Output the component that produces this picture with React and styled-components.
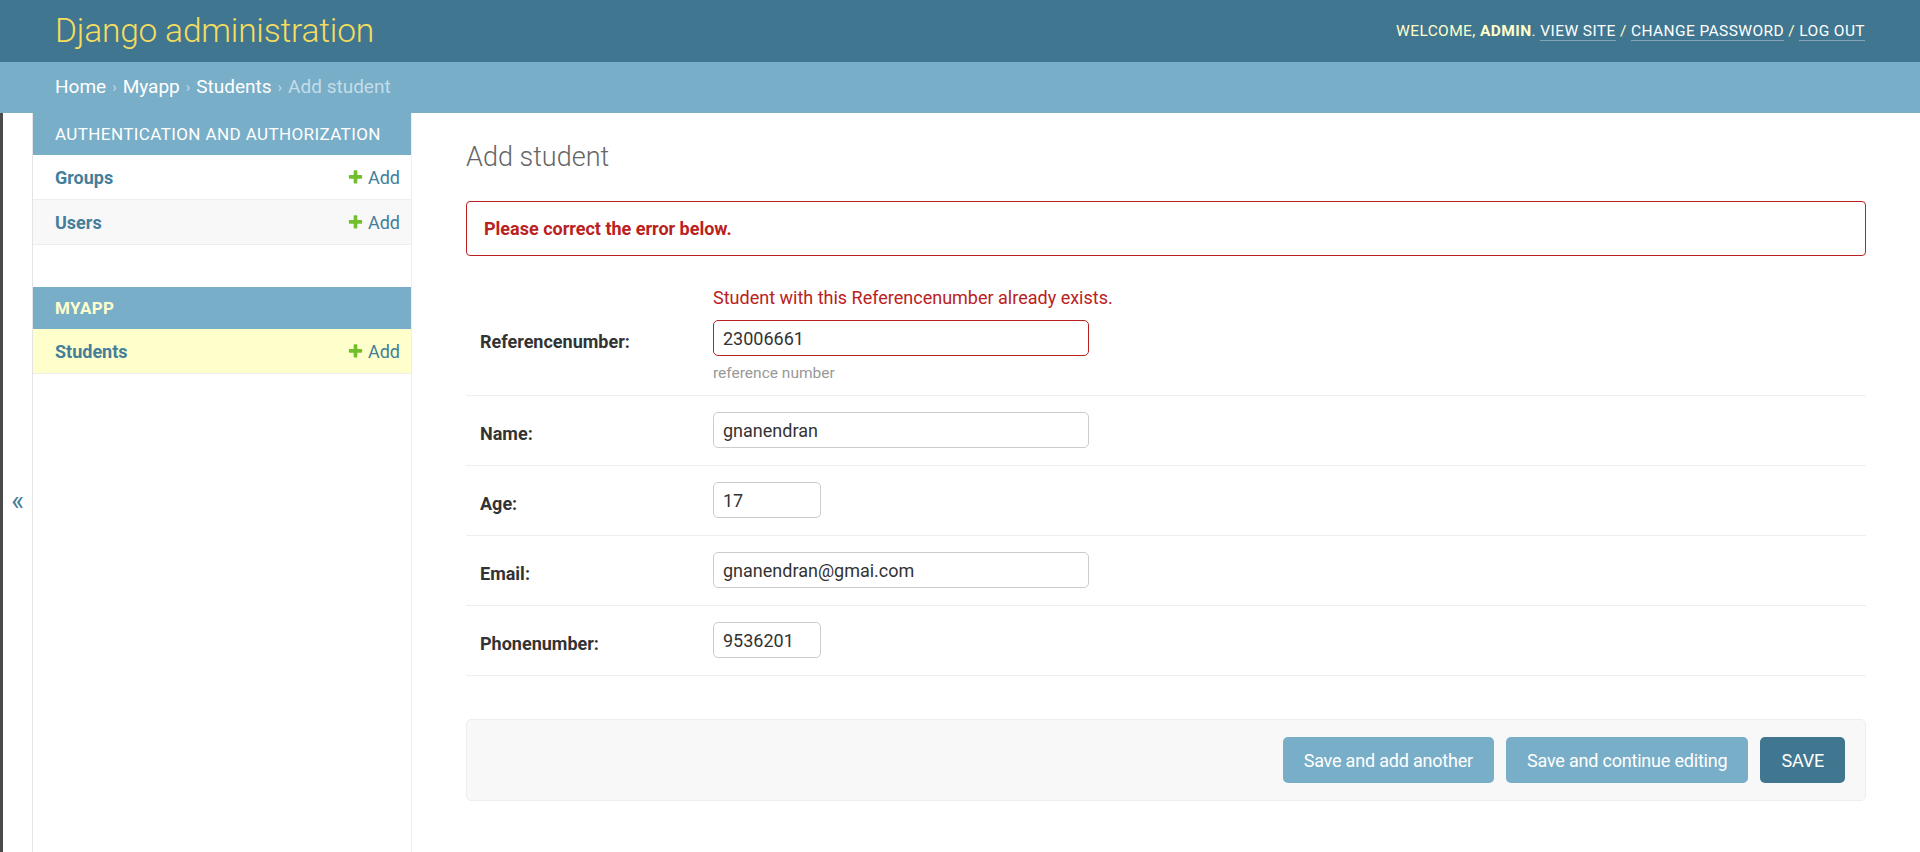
import React from 'react';
import styled, { createGlobalStyle } from 'styled-components';

const headerBg = '#417690';
const primary = '#79aec8';
const linkColor = '#447e9b';
const errorColor = '#ba2121';
const hairline = '#eeeeee';

const GlobalStyle = createGlobalStyle`
  html, body {
    margin: 0;
    padding: 0;
    background: #fff;
  }

  body {
    color: #333;
    font-family: Roboto, "Liberation Sans", sans-serif;
  }

  * {
    box-sizing: border-box;
  }
`;

const Header = styled.header`
  align-items: center;
  background: ${headerBg};
  display: flex;
  height: 62px;
  justify-content: space-between;
  padding: 0 55px;
`;

const Branding = styled.h1`
  color: #f5dd5d;
  font-size: 33.5px;
  font-weight: 300;
  letter-spacing: -0.2px;
  margin: 0 0 2px;
`;

const UserTools = styled.div`
  color: #ffc;
  font-size: 15.5px;
  font-weight: 400;
  letter-spacing: 0.4px;
  text-transform: uppercase;

  strong {
    font-weight: 700;
  }
`;

const ToolLink = styled.a`
  border-bottom: 1px solid rgba(255, 255, 255, 0.35);
  color: #fff;
  text-decoration: none;
`;

const Breadcrumbs = styled.nav`
  align-items: center;
  background: ${primary};
  color: #c4dce8;
  display: flex;
  font-size: 19px;
  height: 51px;
  padding: 0 55px 2px;
`;

const Crumb = styled.a`
  color: #fff;
  text-decoration: none;
`;

const Sep = styled.span`
  color: #c4dce8;
  font-size: 15px;
  margin: 0 6px;
`;

const Main = styled.div`
  display: flex;
  min-height: calc(100vh - 113px);
`;

const Toggle = styled.div`
  align-items: center;
  border-left: 3px solid #4a4a4a;
  border-right: 1px solid #e4e4e4;
  color: ${linkColor};
  display: flex;
  flex: 0 0 33px;
  font-size: 27px;
  justify-content: center;
  padding-top: 36px;
`;

const Sidebar = styled.aside`
  border-right: 1px solid ${hairline};
  flex: 0 0 379px;
`;

const Module = styled.div`
  margin-bottom: 42px;
`;

const Caption = styled.div`
  align-items: center;
  background: ${primary};
  color: ${({ current }) => (current ? '#ffc' : '#fff')};
  display: flex;
  font-size: 17px;
  font-weight: ${({ current }) => (current ? 700 : 400)};
  height: 42px;
  letter-spacing: 0.4px;
  padding: 0 22px;
  text-transform: uppercase;
`;

const ModelRow = styled.div`
  align-items: center;
  background: ${({ current, alt }) => (current ? '#ffffcc' : alt ? '#f8f8f8' : '#fff')};
  border-bottom: 1px solid ${hairline};
  display: flex;
  height: 45px;
  justify-content: space-between;
  padding: 0 11px 0 22px;
`;

const ModelName = styled.a`
  color: ${linkColor};
  font-size: 18px;
  font-weight: 700;
  text-decoration: none;
`;

const AddLink = styled.a`
  align-items: center;
  color: ${linkColor};
  display: flex;
  font-size: 18px;
  gap: 4px;
  text-decoration: none;

  svg {
    height: 17px;
    width: 17px;
  }
`;

const Content = styled.main`
  flex: 1;
  padding: 28px 54px 40px 54px;
`;

const Title = styled.h1`
  color: #666;
  font-size: 27px;
  font-weight: 300;
  margin: 0 0 28px;
`;

const ErrorNote = styled.p`
  border: 1px solid ${errorColor};
  border-radius: 4px;
  color: ${errorColor};
  font-size: 18px;
  font-weight: 700;
  margin: 0 0 18px;
  padding: 16px 17px;
`;

const FormRow = styled.div`
  border-bottom: 1px solid ${hairline};
  padding: ${({ first }) => (first ? '13px 14px 13px' : '16px 14px 17px')};
`;

const ErrorList = styled.div`
  color: ${errorColor};
  font-size: 18px;
  line-height: 22px;
  margin: 0 0 11px 233px;
`;

const FieldLine = styled.div`
  align-items: center;
  display: flex;
`;

const Label = styled.label`
  color: #333;
  flex: 0 0 233px;
  font-size: 18px;
  font-weight: 700;
  padding-top: 6px;
`;

const Input = styled.input`
  border: 1px solid ${({ invalid }) => (invalid ? errorColor : '#ccc')};
  border-radius: 5px;
  color: #333;
  font-family: Roboto, "Liberation Sans", sans-serif;
  font-size: 18px;
  height: 36px;
  padding: 0 9px;
  width: ${({ small }) => (small ? '108px' : '376px')};
`;

const Help = styled.div`
  color: #999;
  font-size: 15.5px;
  margin: 8px 0 0 233px;
`;

const SubmitRow = styled.div`
  background: #f8f8f8;
  border: 1px solid ${hairline};
  border-radius: 5px;
  display: flex;
  gap: 12px;
  justify-content: flex-end;
  margin-top: 43px;
  padding: 17px 20px 17px;
`;

const Button = styled.button`
  background: ${({ primaryAction }) => (primaryAction ? headerBg : primary)};
  border: none;
  border-radius: 5px;
  color: #fff;
  font-family: Roboto, "Liberation Sans", sans-serif;
  font-size: 18px;
  height: 46px;
  letter-spacing: -0.2px;
  padding: 0 21px;
  text-transform: ${({ primaryAction }) => (primaryAction ? 'uppercase' : 'none')};
`;

const PlusIcon = () => (
  <svg viewBox="0 0 1792 1792">
    <path
      fill="#70bf2b"
      d="M1600 736v192q0 40-28 68t-68 28h-416v416q0 40-28 68t-68 28h-192q-40 0-68-28t-28-68v-416h-416q-40 0-68-28t-28-68v-192q0-40 28-68t68-28h416v-416q0-40 28-68t68-28h192q40 0 68 28t28 68v416h416q40 0 68 28t28 68z"
    />
  </svg>
);

const fields = [
  { label: 'Name:', value: 'gnanendran' },
  { label: 'Age:', value: '17', small: true },
  { label: 'Email:', value: 'gnanendran@gmai.com' },
  { label: 'Phonenumber:', value: '9536201', small: true },
];

export default function App() {
  return (
    <>
      <GlobalStyle />
      <Header>
        <Branding>Django administration</Branding>
        <UserTools>
          Welcome, <strong>admin</strong>. <ToolLink href="#">View site</ToolLink> /{' '}
          <ToolLink href="#">Change password</ToolLink> / <ToolLink href="#">Log out</ToolLink>
        </UserTools>
      </Header>
      <Breadcrumbs>
        <Crumb href="#">Home</Crumb>
        <Sep>›</Sep>
        <Crumb href="#">Myapp</Crumb>
        <Sep>›</Sep>
        <Crumb href="#">Students</Crumb>
        <Sep>›</Sep>
        Add student
      </Breadcrumbs>
      <Main>
        <Toggle>«</Toggle>
        <Sidebar>
          <Module>
            <Caption>Authentication and Authorization</Caption>
            <ModelRow>
              <ModelName href="#">Groups</ModelName>
              <AddLink href="#"><PlusIcon />Add</AddLink>
            </ModelRow>
            <ModelRow alt>
              <ModelName href="#">Users</ModelName>
              <AddLink href="#"><PlusIcon />Add</AddLink>
            </ModelRow>
          </Module>
          <Module>
            <Caption current>Myapp</Caption>
            <ModelRow current>
              <ModelName href="#">Students</ModelName>
              <AddLink href="#"><PlusIcon />Add</AddLink>
            </ModelRow>
          </Module>
        </Sidebar>
        <Content>
          <Title>Add student</Title>
          <ErrorNote>Please correct the error below.</ErrorNote>
          <FormRow first>
            <ErrorList>Student with this Referencenumber already exists.</ErrorList>
            <FieldLine>
              <Label>Referencenumber:</Label>
              <Input invalid defaultValue="23006661" />
            </FieldLine>
            <Help>reference number</Help>
          </FormRow>
          {fields.map((f) => (
            <FormRow key={f.label}>
              <FieldLine>
                <Label>{f.label}</Label>
                <Input small={f.small} defaultValue={f.value} />
              </FieldLine>
            </FormRow>
          ))}
          <SubmitRow>
            <Button>Save and add another</Button>
            <Button>Save and continue editing</Button>
            <Button primaryAction>Save</Button>
          </SubmitRow>
        </Content>
      </Main>
    </>
  );
}
